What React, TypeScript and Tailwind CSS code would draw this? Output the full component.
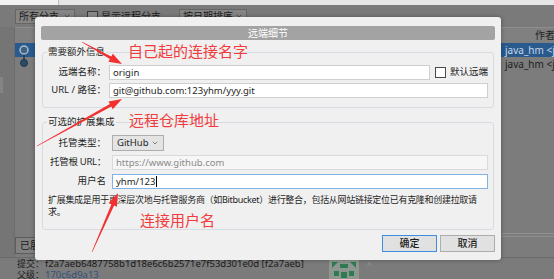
import { ChevronDown } from 'lucide-react'

type Arrow = { x1: number; y1: number; x2: number; y2: number }

const arrows: Arrow[] = [
  { x1: 82, y1: 42, x2: 122, y2: 64 },
  { x1: 37, y1: 146, x2: 122, y2: 99 },
  { x1: 92, y1: 252, x2: 118, y2: 193 },
]

// tapered red annotation arrow: thin tail, wider shaft, filled head
function arrowPoints({ x1, y1, x2, y2 }: Arrow) {
  const dx = x2 - x1
  const dy = y2 - y1
  const len = Math.hypot(dx, dy)
  const ux = dx / len
  const uy = dy / len
  const nx = -uy
  const ny = ux
  const head = 13
  const headW = 9
  const shaft = 3
  const tail = 0.6
  const bx = x2 - ux * head
  const by = y2 - uy * head
  const p = (x: number, y: number) => `${x.toFixed(1)},${y.toFixed(1)}`
  return [
    p(x1 + (nx * tail) / 2, y1 + (ny * tail) / 2),
    p(bx + (nx * shaft) / 2, by + (ny * shaft) / 2),
    p(bx + (nx * headW) / 2, by + (ny * headW) / 2),
    p(x2, y2),
    p(bx - (nx * headW) / 2, by - (ny * headW) / 2),
    p(bx - (nx * shaft) / 2, by - (ny * shaft) / 2),
    p(x1 - (nx * tail) / 2, y1 - (ny * tail) / 2),
  ].join(' ')
}

function Field({ children, className = '' }: { children?: React.ReactNode; className?: string }) {
  return (
    <div className={`flex h-[15px] min-w-0 items-center border px-[3px] leading-none whitespace-nowrap ${className}`}>
      {children}
    </div>
  )
}

function Background() {
  return (
    <div className="flex h-full flex-col">
      <div className="flex h-[5px]">
        <div className="w-[58px] bg-[#f2f2f2]" />
        <div className="flex-1 border-l border-[#bdbdbd] bg-[#e6e6e6]" />
      </div>

      <div className="flex h-[22px] items-center gap-[12px] px-[15px] text-[10px] text-[#1c1c1c]">
        <div className="flex h-[15px] w-[60px] items-center justify-between border border-[#666] bg-[#858585] px-[3px]">
          <span>所有分支</span>
          <ChevronDown size={8} strokeWidth={1.5} />
        </div>
        <div className="flex items-center gap-[3px]">
          <div className="h-[11px] w-[11px] border border-[#3a3a3a] bg-[#8a8a8a]" />
          <span>显示远程分支</span>
        </div>
        <div className="ml-[6px] flex h-[15px] w-[68px] items-center justify-between border border-[#666] bg-[#858585] px-[3px]">
          <span>按日期排序</span>
          <ChevronDown size={8} strokeWidth={1.5} />
        </div>
      </div>

      <div className="flex flex-1">
        <div className="w-[15px] border-r border-[#6c6c6c] bg-[#757575]">
          <div className="mt-[50px] h-[16px] w-[3px] bg-[#848484]" />
        </div>
        <div className="flex flex-1 flex-col bg-[#7c7c7c]">
          <div className="flex h-[16px] items-center border-t border-[#8e8e8e] bg-[#808080] text-[10px] text-[#222]">
            <div className="flex-1" />
            <div className="w-[52px] overflow-hidden pl-[33px] whitespace-nowrap">作者</div>
          </div>
          <div className="flex h-[14px] items-center bg-[#285a8e] text-[10px] text-[#c9d6e4]">
            <svg width="20" height="14" className="shrink-0">
              <line x1="9" y1="8" x2="9" y2="14" stroke="#243a52" strokeWidth="1.5" />
              <circle cx="9" cy="7" r="4" fill="#41627f" stroke="#a9bccd" strokeWidth="1.5" />
            </svg>
            <div className="flex-1" />
            <div className="w-[52px] overflow-hidden pl-[3px] whitespace-nowrap">java_hm &lt;j</div>
          </div>
          <div className="flex h-[14px] items-center text-[10px] text-[#1c1c1c]">
            <svg width="20" height="14" className="shrink-0">
              <line x1="9" y1="0" x2="9" y2="6" stroke="#243a52" strokeWidth="1.5" />
              <circle cx="9" cy="6" r="3.5" fill="#2b4a68" stroke="#1f354b" strokeWidth="1" />
            </svg>
            <div className="flex-1" />
            <div className="w-[52px] overflow-hidden pl-[3px] whitespace-nowrap">java_hm &lt;j</div>
          </div>
          <div className="flex-1" />
          <div className="flex items-end">
            <div className="mb-[3px] flex h-[17px] w-[60px] items-center border border-[#5c5c5c] bg-[#828282] px-[4px] text-[10px] text-[#1c1c1c]">
              已展开
            </div>
            <div className="flex-1" />
            <div className="mb-[20px] h-[4px] w-[52px] border-y border-[#909090]" />
          </div>
        </div>
      </div>

      <div className="flex h-[22px] border-t border-[#6a6a6a] bg-[#7b7b7b] pl-[15px] text-[9.5px] leading-[11px] text-[#1a1a1a]">
        <div className="w-[314px] shrink-0">
          <div className="flex h-[11px] items-center whitespace-nowrap">
            <span className="w-[30px] shrink-0 pl-[2px] text-[9px]">提交：</span>
            <span>f2a7aeb6487758b1d18e6c6b2571e7f53d301e0d [f2a7aeb]</span>
          </div>
          <div className="flex h-[11px] items-center whitespace-nowrap">
            <span className="w-[30px] shrink-0 pl-[2px] text-[9px]">父级：</span>
            <span className="text-[#33507a]">170c6d9a13</span>
          </div>
        </div>
        <svg width="30" height="20" className="mt-[2px] shrink-0">
          <rect width="30" height="20" fill="#8e9690" />
          <polygon points="3,2 9,2 3,8" fill="#2f7a52" />
          <polygon points="27,2 21,2 27,8" fill="#2f7a52" />
          <rect x="11" y="4" width="8" height="4" fill="#2f7a52" />
          <rect x="5" y="11" width="5" height="5" fill="#2f7a52" />
          <rect x="20" y="11" width="5" height="5" fill="#2f7a52" />
          <rect x="12" y="12" width="6" height="6" fill="#2f7a52" />
        </svg>
        <div className="ml-[8px] pt-[1px] text-[8px] text-[#9a9a9a]">^</div>
      </div>
    </div>
  )
}

function Dialog() {
  return (
    <div className="absolute top-[17px] left-[35px] flex w-[466px] flex-col rounded-[3px] bg-[#f0f0f0] px-[6px] pt-[9px] pb-[8px] text-[9.5px] text-[#1e1e1e] shadow-[0_0_4px_rgba(0,0,0,0.35)]">
      <div className="flex h-[14px] items-center justify-center rounded-[2px] bg-[#a3a3a3] text-[10px] text-white">
        远端细节
      </div>

      <fieldset className="mx-[1px] mt-[6px] min-w-0 rounded-[3px] border border-[#d7dce2] pr-[5px] pb-[9px]">
        <legend className="ml-[4px] px-[1px] leading-[12px]">需要额外信息</legend>
        <div className="mt-[7px] grid grid-cols-[63px_1fr] items-center gap-x-[3px] gap-y-[3px]">
          <div className="text-right whitespace-nowrap">远端名称：</div>
          <div className="flex items-center">
            <Field className="w-[321px] border-[#cfcfcf] bg-white">origin</Field>
            <div className="ml-[5px] h-[11px] w-[11px] border border-[#4a4a4a] bg-white" />
            <span className="ml-[4px] whitespace-nowrap">默认远端</span>
          </div>
          <div className="text-right whitespace-nowrap">URL / 路径：</div>
          <Field className="border-[#cfcfcf] bg-white">git@github.com:123yhm/yyy.git</Field>
        </div>
      </fieldset>

      <fieldset className="mx-[1px] mt-[8px] min-w-0 rounded-[3px] border border-[#d7dce2] pr-[5px] pb-[11px]">
        <legend className="ml-[4px] px-[1px] leading-[12px]">可选的扩展集成</legend>
        <div className="mt-[7px] grid grid-cols-[63px_1fr] items-center gap-x-[6px] gap-y-[4px]">
          <div className="text-right whitespace-nowrap">托管类型：</div>
          <div className="flex h-[16px] w-[52px] items-center justify-between border border-[#adadad] bg-[#e4e4e4] px-[4px]">
            <span>GitHub</span>
            <ChevronDown size={8} strokeWidth={1.5} />
          </div>
          <div className="text-right tracking-[-0.3px] whitespace-nowrap">托管根 URL：</div>
          <Field className="border-[#dadada] bg-[#f6f6f6] text-[#8a8a8a]">https://www.github.com</Field>
          <div className="text-right">用户名</div>
          <Field className="border-[#7fb2e5] bg-white">
            yhm/123
            <span className="ml-[1px] h-[11px] w-[1px] bg-black" />
          </Field>
        </div>
        <div className="mt-[5px] pl-[5px] text-[9px] leading-[12px] tracking-[-0.3px] whitespace-nowrap">
          扩展集成是用于更深层次地与托管服务商（如Bitbucket）进行整合，包括从网站链接定位已有克隆和创建拉取请
          <br />
          求。
        </div>
      </fieldset>

      <div className="mt-[5px] flex justify-end gap-[3px]">
        <button className="h-[17px] w-[55px] border border-[#3d8ee0] bg-[#e1e1e1] text-[10px] font-medium">确定</button>
        <button className="h-[17px] w-[55px] border border-[#adadad] bg-[#e1e1e1] text-[10px] font-medium">取消</button>
      </div>
    </div>
  )
}

export default function App() {
  return (
    <div className="relative h-[279px] w-[554px] overflow-hidden bg-[#7a7a7a] font-['Noto_Sans','Noto_Sans_CJK_SC',sans-serif]">
      <Background />
      <Dialog />

      <div className="absolute top-[42px] left-[128px] font-['Noto_Sans_CJK_SC',sans-serif] text-[15px] leading-[18px] text-[#f23b3b]">
        自己起的连接名字
      </div>
      <div className="absolute top-[111px] left-[129px] font-['Noto_Sans_CJK_SC',sans-serif] text-[15px] leading-[18px] text-[#f23b3b]">
        远程仓库地址
      </div>
      <div className="absolute top-[211px] left-[140px] font-['Noto_Sans_CJK_SC',sans-serif] text-[15px] leading-[18px] text-[#f23b3b]">
        连接用户名
      </div>

      <svg className="pointer-events-none absolute inset-0" width="554" height="279">
        {arrows.map((a, i) => (
          <polygon key={i} points={arrowPoints(a)} fill="#f23030" />
        ))}
      </svg>
    </div>
  )
}
